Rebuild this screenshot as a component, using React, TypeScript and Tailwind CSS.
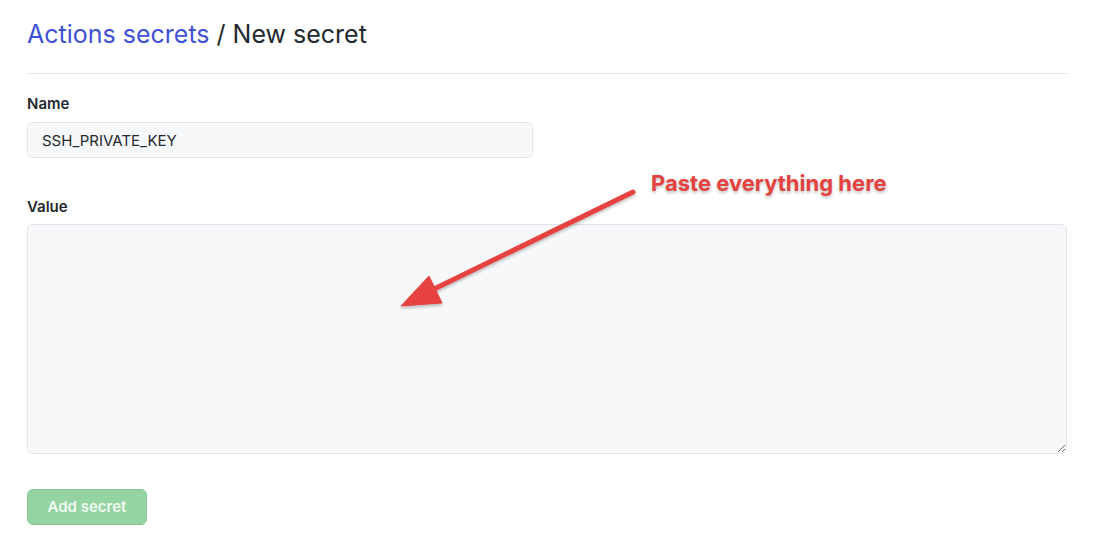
export default function App() {
  return (
    <main className="relative min-h-screen bg-white font-['Inter',sans-serif] text-[#24292e]">
      <div className="w-[1040px] ml-[27px]">
        <div className="pt-[16px] pb-[21px] border-b border-[#e1e4e8]">
          <h1 className="text-[25px] leading-9 font-normal">
            <a href="#" className="text-[#3f51d6]">Actions secrets</a> / New secret
          </h1>
        </div>

        <form className="pt-[19px]" onSubmit={e => e.preventDefault()}>
          <label className="block text-[15px] leading-[21px] font-semibold">Name</label>
          <input
            readOnly
            value="SSH_PRIVATE_KEY"
            className="mt-[8px] block w-[506px] h-9 px-[14px] text-[15px] text-[#24292e] bg-[#f6f8fa] border border-[#e1e4e8] rounded-md outline-none"
          />

          <label className="block mt-[38px] text-[15px] leading-[21px] font-semibold">Value</label>
          <textarea className="mt-[7px] block w-full h-[230px] bg-[#f6f8fa] border border-[#e1e4e8] rounded-md outline-none" />

          <button
            type="submit"
            disabled
            className="mt-[35px] h-9 w-[120px] rounded-md bg-[#94d3a2] border border-[#86c996] text-[#f1faf3] text-[15px] font-semibold"
          >
            Add secret
          </button>
        </form>
      </div>

      {/* annotation overlay */}
      <div className="absolute left-[651px] top-[168px] text-[22px] leading-[30px] font-bold text-[#e5423f] [text-shadow:0_2px_3px_rgba(0,0,0,0.25)]">
        Paste everything here
      </div>
      <svg className="absolute left-0 top-0 pointer-events-none" width="1096" height="551">
        <defs>
          <filter id="sh" x="-10%" y="-10%" width="120%" height="120%">
            <feDropShadow dx="0" dy="2" stdDeviation="1.5" floodColor="#000" floodOpacity="0.25" />
          </filter>
        </defs>
        <g filter="url(#sh)" fill="#e5423f" stroke="#e5423f">
          <line x1="633" y1="192" x2="428" y2="292" strokeWidth="5" strokeLinecap="round" />
          <polygon points="401,306 429,276 442,303" strokeWidth="1" strokeLinejoin="round" />
        </g>
      </svg>
    </main>
  )
}
